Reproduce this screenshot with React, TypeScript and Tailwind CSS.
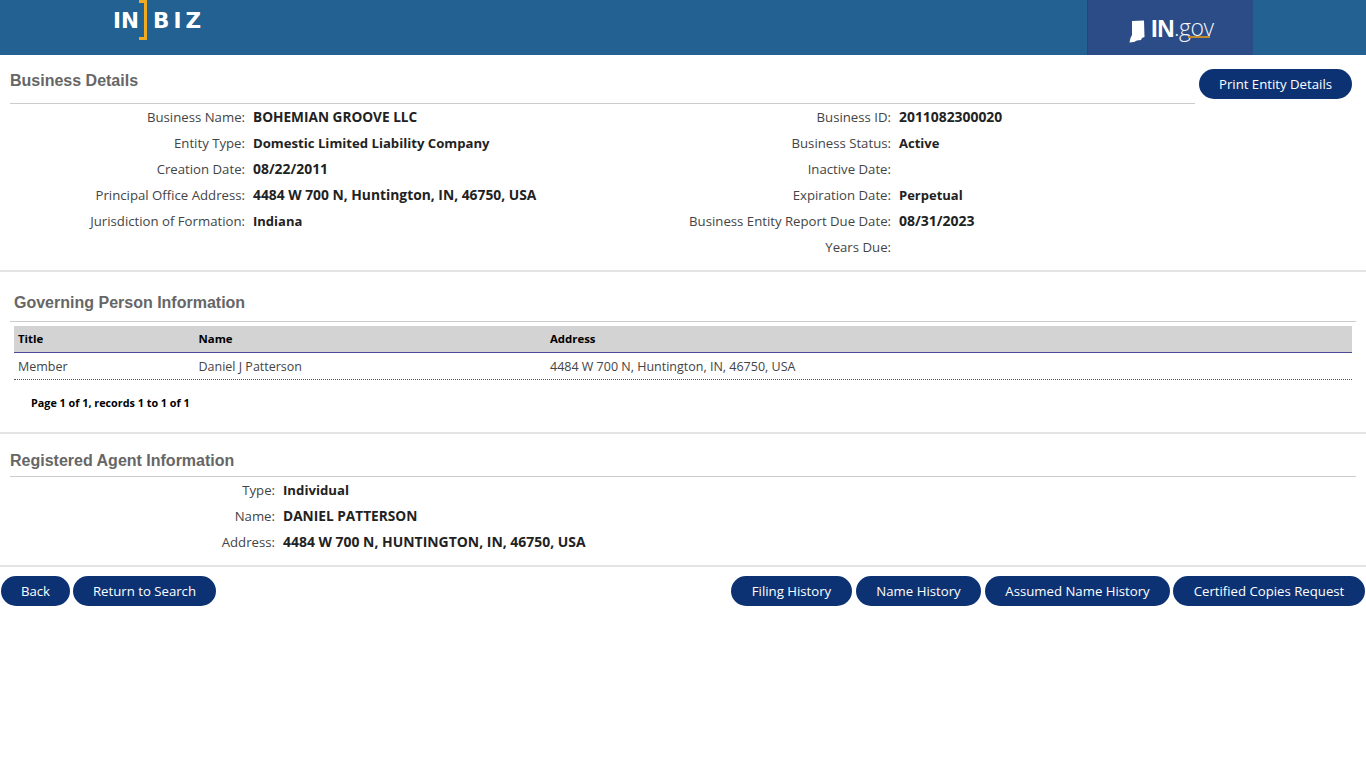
import React from 'react';

const bodyFont = "font-['Open_Sans',sans-serif]";
const headFont = "font-['Liberation_Sans',Arial,sans-serif]";

const PillButton = ({ label, width }: { label: string; width: string }) => (
  <button
    className={`h-[30px] ${width} shrink-0 rounded-[15px] bg-[#0d3274] text-center text-[13.2px] leading-[30px] text-white ${bodyFont}`}
  >
    {label}
  </button>
);

const Field = ({
  label,
  value,
  labelWidth,
  valueSize = 'text-[13px]',
}: {
  label: string;
  value?: string;
  labelWidth: string;
  valueSize?: string;
}) => (
  <div className="flex h-[26px] items-baseline whitespace-nowrap pt-[3px]">
    <span className={`${labelWidth} shrink-0 text-right text-[13.2px] leading-[20px] text-[#444444]`}>
      {label}
    </span>
    <span className={`ml-2 font-bold leading-[20px] text-[#222222] ${valueSize}`}>{value}</span>
  </div>
);

const Divider = () => <div className="h-[2px] bg-[#e4e4e4]" />;

const Header = () => (
  <div className="flex h-[55px] bg-[#236192]">
    <div className="ml-[113px] flex h-[40px] w-[92px] items-center text-[21.5px] font-bold leading-none text-white font-['DejaVu_Sans',sans-serif]">
      <span className="mt-px w-[27px]">IN</span>
      <span className="h-[40px] w-[9px] border-b-[3px] border-r-[3px] border-t-[3px] border-[#f0ab23]" />
      <span className="ml-[6px] mt-px tracking-[4px]">BIZ</span>
    </div>
    <div className="ml-[882px] flex h-[55px] w-[166px] items-center border-l border-[#1c4a7c] bg-[#2b4c87] pl-[41px]">
      <svg width="16" height="23" viewBox="0 0 16 23" className="mt-[7px]">
        <path d="M3 1 L15 0.5 L15.5 17 L13 18 L12 20 L8 20.5 L5 22 L0.5 22.5 L1.5 18 L3 15 Z" fill="#ffffff" />
      </svg>
      <span className={`ml-[6px] mt-[3px] text-[24px] font-bold leading-none tracking-[-0.5px] text-white ${headFont}`}>
        IN
      </span>
      <span className={`relative text-[23px] font-light leading-none tracking-[-0.5px] text-[#f2f4f8] ${bodyFont}`}>
        .gov
        <span className="absolute bottom-[1px] left-[14px] h-[2px] w-[22px] bg-[#c08a2c]" />
      </span>
    </div>
    <div className="flex-1" />
  </div>
);

const BusinessDetails = () => (
  <div className="flex pb-[10px]">
    <div className="w-[1195px]">
      <div className={`ml-[10px] flex h-[49px] items-end border-b border-[#cccccc] pb-[12px] text-[16px] font-bold leading-[20px] text-[#666666] ${headFont}`}>
        Business Details
      </div>
      <div className="flex">
        <div className="w-[646px]">
          <Field labelWidth="w-[245px]" label="Business Name:" value="BOHEMIAN GROOVE LLC" valueSize="text-[13.65px]" />
          <Field labelWidth="w-[245px]" label="Entity Type:" value="Domestic Limited Liability Company" valueSize="text-[13.15px]" />
          <Field labelWidth="w-[245px]" label="Creation Date:" value="08/22/2011" valueSize="text-[13.9px]" />
          <Field labelWidth="w-[245px]" label="Principal Office Address:" value="4484 W 700 N, Huntington, IN, 46750, USA" valueSize="text-[13.83px]" />
          <Field labelWidth="w-[245px]" label="Jurisdiction of Formation:" value="Indiana" />
        </div>
        <div>
          <Field labelWidth="w-[245px]" label="Business ID:" value="2011082300020" valueSize="text-[13.9px]" />
          <Field labelWidth="w-[245px]" label="Business Status:" value="Active" />
          <Field labelWidth="w-[245px]" label="Inactive Date:" />
          <Field labelWidth="w-[245px]" label="Expiration Date:" value="Perpetual" />
          <Field labelWidth="w-[245px]" label="Business Entity Report Due Date:" value="08/31/2023" valueSize="text-[14px]" />
          <Field labelWidth="w-[245px]" label="Years Due:" />
        </div>
      </div>
    </div>
    <div className="ml-[4px] mt-[14px]">
      <PillButton label="Print Entity Details" width="w-[153px]" />
    </div>
  </div>
);

const GoverningPersons = () => (
  <div className="h-[160px]">
    <div className={`mx-[10px] flex h-[50px] items-end border-b border-[#cccccc] pb-[8px] pl-[4px] text-[16px] font-bold leading-[20px] text-[#666666] ${headFont}`}>
      Governing Person Information
    </div>
    <div className="mx-[14px] mt-[4px]">
      <div className="flex h-[27px] items-center border-b border-[#4a4a96] bg-[#d3d3d3] text-[11.4px] font-bold text-black">
        <span className="w-[184.5px] pl-[4px]">Title</span>
        <span className="w-[351.5px]">Name</span>
        <span>Address</span>
      </div>
      <div className="flex h-[27px] items-center border-b border-dotted border-[#555555] pt-[3px] text-[12.5px] text-[#444444]">
        <span className="w-[184.5px] pl-[4px]">Member</span>
        <span className="w-[351.5px]">Daniel J Patterson</span>
        <span>4484 W 700 N, Huntington, IN, 46750, USA</span>
      </div>
      <div className="ml-[17px] mt-[15px] text-[10.8px] font-bold leading-[16px] text-black">
        Page 1 of 1, records 1 to 1 of 1
      </div>
    </div>
  </div>
);

const RegisteredAgent = () => (
  <div className="h-[131px]">
    <div className={`mx-[10px] flex h-[43px] items-end border-b border-[#cccccc] pb-[5px] text-[16px] font-bold leading-[20px] text-[#666666] ${headFont}`}>
      Registered Agent Information
    </div>
    <Field labelWidth="w-[275px]" label="Type:" value="Individual" valueSize="text-[13.2px]" />
    <Field labelWidth="w-[275px]" label="Name:" value="DANIEL PATTERSON" valueSize="text-[13.7px]" />
    <Field labelWidth="w-[275px]" label="Address:" value="4484 W 700 N, HUNTINGTON, IN, 46750, USA" valueSize="text-[13.95px]" />
  </div>
);

export default function App() {
  return (
    <div className={`min-h-[768px] bg-white ${bodyFont}`}>
      <Header />
      <BusinessDetails />
      <Divider />
      <GoverningPersons />
      <Divider />
      <RegisteredAgent />
      <Divider />
      <div className="flex items-center gap-[3px] pl-px pt-[9px]">
        <PillButton label="Back" width="w-[69px]" />
        <PillButton label="Return to Search" width="w-[143px]" />
        <div className="flex-1" />
        <div className="flex gap-[4px]">
          <PillButton label="Filing History" width="w-[121px]" />
          <PillButton label="Name History" width="w-[125px]" />
          <PillButton label="Assumed Name History" width="w-[185px]" />
          <div className="-ml-px mr-px">
            <PillButton label="Certified Copies Request" width="w-[192px]" />
          </div>
        </div>
      </div>
    </div>
  );
}
